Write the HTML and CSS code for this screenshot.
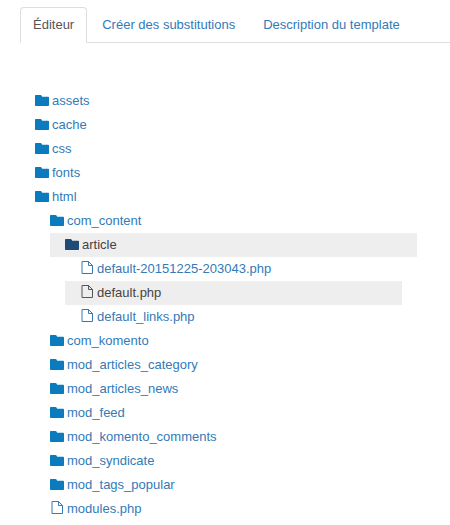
FILE: index.html
```html
<!DOCTYPE html>
<html lang="fr">
<head>
	<meta charset="UTF-8">
	<title>Éditeur de template</title>
	<link rel="stylesheet" href="styles.css">
</head>
<body>
	<svg class="defs" width="0" height="0">
		<symbol id="folder" viewBox="0 0 14 11">
			<path d="M0 1C0 .4.4 0 1 0h4.500c.6 0 1 .4 1.300 1l.3.7H13c.6 0 1 .4 1 1V10c0 .6-.4 1-1 1H1c-.6 0-1-.4-1-1z"/>
		</symbol>
		<symbol id="file" viewBox="0 0 14 13">
			<path d="M2 .5h6.500l4 4v8H2zM8.500 .5v4h4" fill="none" stroke="currentColor"/>
		</symbol>
	</svg>

	<ul class="tabs">
		<li class="tab active"><a href="#">Éditeur</a></li>
		<li class="tab"><a href="#">Créer des substitutions</a></li>
		<li class="tab"><a href="#">Description du template</a></li>
	</ul>

	<ul class="tree">
		<li><a class="row" href="#"><svg class="icon-folder"><use href="#folder"/></svg>assets</a></li>
		<li><a class="row" href="#"><svg class="icon-folder"><use href="#folder"/></svg>cache</a></li>
		<li><a class="row" href="#"><svg class="icon-folder"><use href="#folder"/></svg>css</a></li>
		<li><a class="row" href="#"><svg class="icon-folder"><use href="#folder"/></svg>fonts</a></li>
		<li>
			<a class="row" href="#"><svg class="icon-folder"><use href="#folder"/></svg>html</a>
			<ul>
				<li>
					<a class="row" href="#"><svg class="icon-folder"><use href="#folder"/></svg>com_content</a>
					<ul>
						<li>
							<a class="row current" href="#"><svg class="icon-folder"><use href="#folder"/></svg>article</a>
							<ul>
								<li><a class="row" href="#"><svg class="icon-file"><use href="#file"/></svg>default-20151225-203043.php</a></li>
								<li><a class="row current" href="#"><svg class="icon-file"><use href="#file"/></svg>default.php</a></li>
								<li><a class="row" href="#"><svg class="icon-file"><use href="#file"/></svg>default_links.php</a></li>
							</ul>
						</li>
					</ul>
				</li>
				<li><a class="row" href="#"><svg class="icon-folder"><use href="#folder"/></svg>com_komento</a></li>
				<li><a class="row" href="#"><svg class="icon-folder"><use href="#folder"/></svg>mod_articles_category</a></li>
				<li><a class="row" href="#"><svg class="icon-folder"><use href="#folder"/></svg>mod_articles_news</a></li>
				<li><a class="row" href="#"><svg class="icon-folder"><use href="#folder"/></svg>mod_feed</a></li>
				<li><a class="row" href="#"><svg class="icon-folder"><use href="#folder"/></svg>mod_komento_comments</a></li>
				<li><a class="row" href="#"><svg class="icon-folder"><use href="#folder"/></svg>mod_syndicate</a></li>
				<li><a class="row" href="#"><svg class="icon-folder"><use href="#folder"/></svg>mod_tags_popular</a></li>
				<li><a class="row" href="#"><svg class="icon-file"><use href="#file"/></svg>modules.php</a></li>
			</ul>
		</li>
	</ul>
</body>
</html>
```

FILE: styles.css
```css
body {
	margin: 0;
	padding: 7px 0 0 20px;
	background-color: #fff;
	font-family: "Liberation Sans", Arial, sans-serif;
	font-size: 13px;
	line-height: 20px;
	color: #337ab7;
	overflow: hidden;
}
a {
	color: #337ab7;
	text-decoration: none;
}
ul {
	list-style: none;
	margin: 0;
	padding: 0;
}
.defs {
	position: absolute;
}
.tabs {
	display: flex;
	border-bottom: 1px solid #ddd;
}
.tab {
	margin-right: 2px;
	margin-bottom: -1px;
}
.tab a {
	display: block;
	padding: 7px 12px;
	border: 1px solid transparent;
	border-radius: 4px 4px 0 0;
}
.tab.active a {
	color: #555;
	background-color: #fff;
	border-color: #ddd #ddd #fff;
}
.tree {
	margin: 46px 3px 0 0;
}
.tree ul {
	margin: 0 15px;
}
.row {
	display: flex;
	align-items: center;
	gap: 3px;
	height: 24px;
	padding-left: 15px;
}
.row.current {
	background-color: #eee;
	color: #444;
}
.icon-folder,
.icon-file {
	flex: none;
	width: 14px;
}
.icon-folder {
	height: 11px;
	margin-top: -1px;
	fill: #0a7bbd;
}
.row.current .icon-folder {
	fill: #1d4b75;
}
.icon-file {
	height: 13px;
	margin-top: -3px;
	color: #337ab7;
}
.row.current .icon-file {
	color: #555;
}
```
